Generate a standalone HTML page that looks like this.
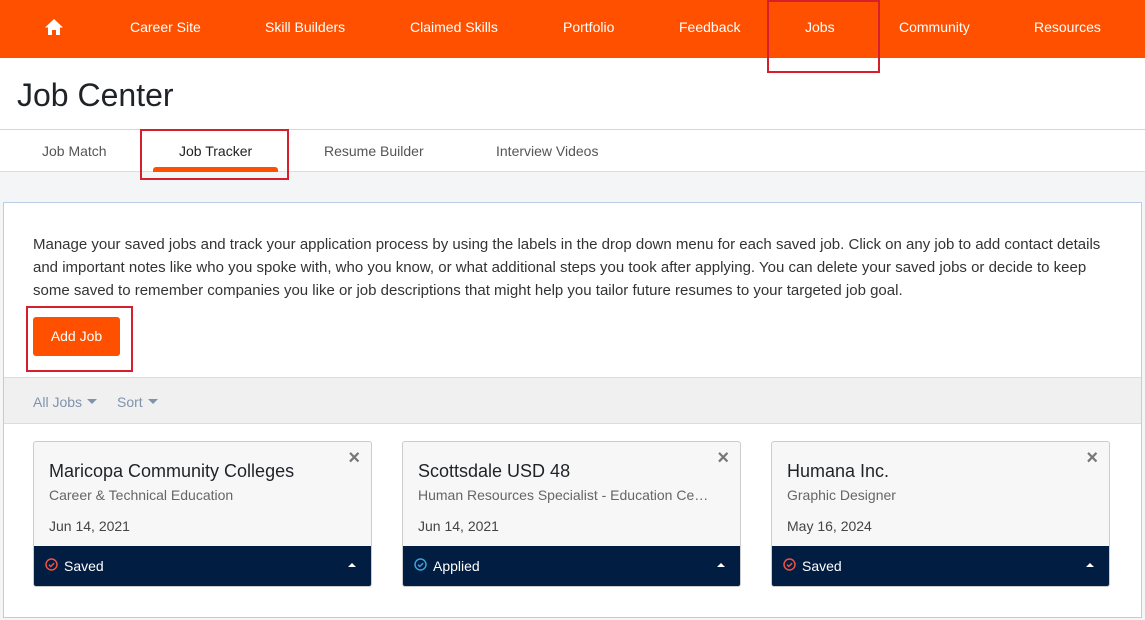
<!DOCTYPE html>
<html><head><style>
*{box-sizing:border-box;margin:0;padding:0}
body{width:1145px;height:620px;overflow:hidden;background:#f4f5f7;font-family:"Liberation Sans",Arial,sans-serif;position:relative}
.nav{position:absolute;left:0;top:0;width:1145px;height:58px;background:#ff5000}
.nav span{position:absolute;top:19px;color:#fff;font-size:14px}
.hdr{position:absolute;left:0;top:58px;width:1145px;height:72px;background:#fff;border-bottom:1px solid #d6d6d6}
.hdr h1{position:absolute;left:17px;top:19px;font-size:32px;font-weight:normal;color:#1f2328}
.tabs{position:absolute;left:0;top:130px;width:1145px;height:42px;background:#fff;border-bottom:1px solid #ddd}
.tabs span{position:absolute;top:13px;font-size:14px;color:#555}
.box{position:absolute;left:3px;top:202px;width:1139px;height:416px;background:#fff;border:1px solid #b9cde6}
.desc{position:absolute;left:29px;top:30px;width:1100px;font-size:15px;line-height:23px;color:#333;white-space:nowrap}
.btn{position:absolute;left:29px;top:114px;width:87px;height:39px;background:#ff5000;border-radius:3px;color:#fff;font-size:14px;text-align:center;line-height:39px}
.bar{position:absolute;left:0;top:174px;width:1137px;height:47px;background:#f0f0f0;border-top:1px solid #ddd;border-bottom:1px solid #ddd}
.bar span{position:absolute;top:16px;font-size:14px;color:#7f93ad}
.bar i{display:inline-block;margin-left:5px;vertical-align:3px;border-left:5px solid transparent;border-right:5px solid transparent;border-top:5px solid #7f93ad}
.card{position:absolute;top:238px;width:339px;height:146px;background:#f7f7f7;border:1px solid #ccc;border-radius:3px;overflow:hidden}
.card .t{position:absolute;left:15px;top:19px;font-size:18px;color:#1f2328}
.card .s{position:absolute;left:15px;top:45px;font-size:14px;color:#666;white-space:nowrap}
.card .d{position:absolute;left:15px;top:76px;font-size:14px;color:#444}
.card .x{position:absolute;right:11px;top:5px;font-size:20px;color:#777;font-weight:bold}
.card .f{position:absolute;left:0;bottom:0;width:100%;height:40px;background:#021d42;color:#fff;font-size:14px}
.f .l{position:absolute;left:30px;top:12px}
.f svg{position:absolute;left:11px;top:12px}
.f .a{position:absolute;right:15px;top:17px;width:0;height:0;border-left:4px solid transparent;border-right:4px solid transparent;border-bottom:4px solid #fff}
.red{position:absolute;border:2px solid #d4202c}
</style></head><body>
<div class="nav">
<svg style="position:absolute;left:44px;top:18px" width="20" height="18" viewBox="0 0 20 18"><path d="M10 1 L19 9.5 H16 V17 H12 V12 H8 V17 H4 V9.5 H1 Z" fill="#fff"/></svg>
<span style="left:130px">Career Site</span><span style="left:265px">Skill Builders</span><span style="left:410px">Claimed Skills</span><span style="left:563px">Portfolio</span><span style="left:679px">Feedback</span><span style="left:805px">Jobs</span><span style="left:899px">Community</span><span style="left:1034px">Resources</span>
</div>
<div class="hdr"><h1>Job Center</h1></div>
<div class="tabs"><span style="left:42px">Job Match</span><span style="left:179px;color:#222">Job Tracker</span><span style="left:324px">Resume Builder</span><span style="left:496px">Interview Videos</span>
<div style="position:absolute;left:153px;top:37px;width:125px;height:5px;background:#ff5000;border-radius:3px 3px 0 0"></div></div>
<div class="box">
<div class="desc">Manage your saved jobs and track your application process by using the labels in the drop down menu for each saved job. Click on any job to add contact details<br>and important notes like who you spoke with, who you know, or what additional steps you took after applying. You can delete your saved jobs or decide to keep<br>some saved to remember companies you like or job descriptions that might help you tailor future resumes to your targeted job goal.</div>
<div class="btn">Add Job</div>
<div class="bar"><span style="left:29px">All Jobs<i></i></span><span style="left:113px">Sort<i></i></span></div>
<div class="card" style="left:29px"><div class="t">Maricopa Community Colleges</div><div class="s">Career &amp; Technical Education</div><div class="d">Jun 14, 2021</div><div class="x">×</div><div class="f"><svg width="13" height="13" viewBox="0 0 13 13"><circle cx="6.5" cy="6.5" r="5.5" fill="none" stroke="#f0503c" stroke-width="1.5"/><path d="M4 6.7l1.8 1.8 3.3-3.3" fill="none" stroke="#f0503c" stroke-width="1.5"/></svg><span class="l">Saved</span><div class="a"></div></div></div>
<div class="card" style="left:398px"><div class="t">Scottsdale USD 48</div><div class="s">Human Resources Specialist - Education Ce…</div><div class="d">Jun 14, 2021</div><div class="x">×</div><div class="f"><svg width="13" height="13" viewBox="0 0 13 13"><circle cx="6.5" cy="6.5" r="5.5" fill="none" stroke="#3aa0d8" stroke-width="1.5"/><path d="M4 6.7l1.8 1.8 3.3-3.3" fill="none" stroke="#3aa0d8" stroke-width="1.5"/></svg><span class="l">Applied</span><div class="a"></div></div></div>
<div class="card" style="left:767px"><div class="t">Humana Inc.</div><div class="s">Graphic Designer</div><div class="d">May 16, 2024</div><div class="x">×</div><div class="f"><svg width="13" height="13" viewBox="0 0 13 13"><circle cx="6.5" cy="6.5" r="5.5" fill="none" stroke="#f0503c" stroke-width="1.5"/><path d="M4 6.7l1.8 1.8 3.3-3.3" fill="none" stroke="#f0503c" stroke-width="1.5"/></svg><span class="l">Saved</span><div class="a"></div></div></div>
</div>
<div class="red" style="left:767px;top:0;width:113px;height:73px"></div>
<div class="red" style="left:140px;top:129px;width:149px;height:51px"></div>
<div class="red" style="left:26px;top:306px;width:107px;height:66px"></div>
</body></html>
